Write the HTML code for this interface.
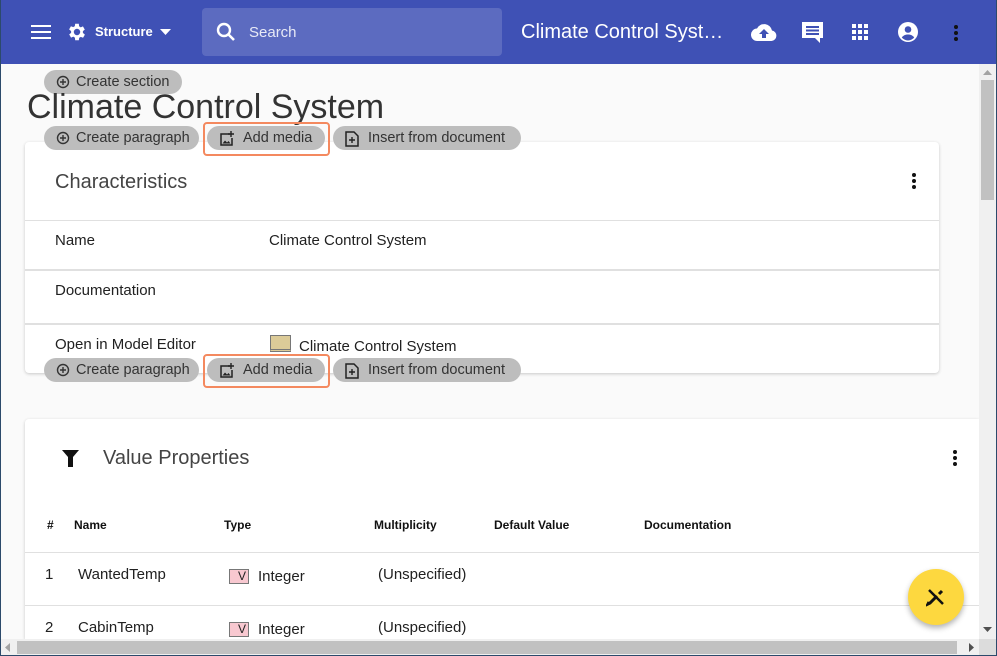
<!DOCTYPE html>
<html><head><style>
*{box-sizing:border-box;margin:0;padding:0}
html{width:997px;height:656px;overflow:hidden}
body{width:997px;height:656px;overflow:hidden;position:relative;font-family:"Liberation Sans",Arial,sans-serif;background:#fafafa;color:#212121}
.frame{position:absolute;inset:0;border:1px solid #2c4a6b;border-top:none;pointer-events:none;z-index:50}
.hdr{position:absolute;left:0;top:0;width:997px;height:64px;background:#3f51b5;color:#fff}
.abs{position:absolute}
.search{left:202px;top:8px;width:300px;height:48px;background:#5c6bc0;border-radius:4px}
.chip{position:absolute;height:24px;background:#bdbdbd;border-radius:12px;font-size:14.5px;color:#333;line-height:24px;padding-left:32px;white-space:nowrap}
.chip svg{position:absolute;left:12px;top:5px}
.hl{position:absolute;border:2px solid #f4895f;border-radius:4px}
.card{position:absolute;background:#fff;box-shadow:0 1px 3px rgba(0,0,0,.2);border-radius:4px}
.sep{position:absolute;left:0;right:0;height:2px;background:#e0e0e0}
.t{position:absolute;font-size:15px;color:#212121;white-space:nowrap}
.th{position:absolute;font-size:12px;font-weight:bold;color:#111}
.vbox{position:absolute;width:20px;height:15px;background:#f8c8d0;border:1px solid #777;font-size:12px;text-align:right;padding-right:2px;line-height:13px}
.dots{position:absolute;width:4px}
.dots i{display:block;width:4px;height:4px;background:#111;border-radius:50%;margin-bottom:2px}
</style></head><body>
<div class="hdr">
 <svg class="abs" style="left:31px;top:24px" width="20" height="16"><rect y="1" width="20" height="2" fill="#fff"/><rect y="7" width="20" height="2" fill="#fff"/><rect y="13" width="20" height="2" fill="#fff"/></svg>
 <svg class="abs" style="left:66px;top:21px" width="22" height="22" viewBox="0 0 24 24"><path fill="#fff" d="M19.4 13a7.5 7.5 0 000-2l2.1-1.6-2-3.5-2.5 1a7 7 0 00-1.7-1L15 3h-4l-.4 2.7a7 7 0 00-1.7 1l-2.5-1-2 3.5L6.6 11a7.5 7.5 0 000 2l-2.1 1.6 2 3.5 2.5-1a7 7 0 001.7 1L11 21h4l.4-2.7a7 7 0 001.7-1l2.5 1 2-3.5zM13 15.5a3.5 3.5 0 110-7 3.5 3.5 0 010 7z" transform="translate(-1 0)"/></svg>
 <div class="abs" style="left:95px;top:24px;font-size:13px;font-weight:bold">Structure</div>
 <svg class="abs" style="left:160px;top:29px" width="11" height="6"><path d="M0 0h11L5.5 6z" fill="#fff"/></svg>
 <div class="abs search"></div>
 <svg class="abs" style="left:216px;top:22px" width="20" height="20" viewBox="0 0 20 20"><circle cx="8" cy="8" r="6" stroke="#fff" stroke-width="2.4" fill="none"/><path d="M12.5 12.5L18 18" stroke="#fff" stroke-width="2.6"/></svg>
 <div class="abs" style="left:249px;top:24px;font-size:15px;color:#e8eaf6">Search</div>
 <div class="abs" style="left:521px;top:21px;font-size:20px">Climate Control Syst…</div>
 <svg class="abs" style="left:751px;top:22px" width="26" height="20" viewBox="0 0 26 20"><path d="M21 8.5A8 8 0 006 6.5 6 6 0 006.5 19H20.5a5.3 5.3 0 00.5-10.5z" fill="#fff"/><path d="M13 7l-5 5h3v4h4v-4h3z" fill="#3f51b5"/></svg>
 <svg class="abs" style="left:802px;top:22px" width="22" height="22" viewBox="0 0 22 22"><path d="M0 0h21v16h-3v5l-5-5H0z" fill="#fff"/><rect x="4" y="4" width="13" height="2" fill="#3f51b5"/><rect x="4" y="7.5" width="13" height="2" fill="#3f51b5"/><rect x="4" y="11" width="13" height="2" fill="#3f51b5"/></svg>
 <svg class="abs" style="left:852px;top:24px" width="16" height="16"><g fill="#fff"><rect width="4" height="4"/><rect x="6" width="4" height="4"/><rect x="12" width="4" height="4"/><rect y="6" width="4" height="4"/><rect x="6" y="6" width="4" height="4"/><rect x="12" y="6" width="4" height="4"/><rect y="12" width="4" height="4"/><rect x="6" y="12" width="4" height="4"/><rect x="12" y="12" width="4" height="4"/></g></svg>
 <svg class="abs" style="left:898px;top:22px" width="20" height="20" viewBox="0 0 20 20"><circle cx="10" cy="10" r="10" fill="#fff"/><circle cx="10" cy="7.5" r="3.3" fill="#3f51b5"/><path d="M3.8 15.5c1.5-2.2 3.8-3 6.2-3s4.7.8 6.2 3A8 8 0 013.8 15.5z" fill="#3f51b5"/></svg>
 <div class="dots" style="left:954px;top:25px"><i></i><i></i><i></i></div>
</div>

<div class="chip" style="left:44px;top:70px;width:138px">
 <svg width="14" height="14" viewBox="0 0 14 14"><circle cx="7" cy="7" r="5.5" stroke="#333" stroke-width="1.4" fill="none"/><path d="M7 4v6M4 7h6" stroke="#333" stroke-width="1.4"/></svg>Create section</div>
<div class="abs" style="left:27px;top:88px;font-size:34px;color:#333">Climate Control System</div>

<div class="card" style="left:25px;top:142px;width:914px;height:231px">
 <div class="t" style="left:30px;top:29px;font-size:20px;color:#444">Characteristics</div>
 <div class="dots" style="left:887px;top:31px"><i></i><i></i><i></i></div>
 <div class="sep" style="top:78px;height:1px"></div>
 <div class="t" style="left:30px;top:90px">Name</div>
 <div class="t" style="left:244px;top:90px">Climate Control System</div>
 <div class="sep" style="top:127px"></div>
 <div class="t" style="left:30px;top:140px">Documentation</div>
 <div class="sep" style="top:181px"></div>
 <div class="t" style="left:30px;top:194px">Open in Model Editor</div>
 <div class="abs" style="left:245px;top:193px;width:21px;height:17px;background:#dccb98;border:1px solid #777;border-bottom:3px double #777"></div>
 <div class="t" style="left:274px;top:196px">Climate Control System</div>
</div>

<div class="chip" style="left:44px;top:126px;width:155px"><svg width="14" height="14" viewBox="0 0 14 14"><circle cx="7" cy="7" r="5.5" stroke="#333" stroke-width="1.4" fill="none"/><path d="M7 4v6M4 7h6" stroke="#333" stroke-width="1.4"/></svg>Create paragraph</div>
<div class="chip" style="left:207px;top:126px;width:118px;padding-left:36px"><svg width="16" height="16" viewBox="0 0 16 16"><path d="M11 3H2v11h11V7" stroke="#222" stroke-width="1.5" fill="none"/><path d="M12 0v6M9 3h6" stroke="#222" stroke-width="1.4"/><path d="M3.5 12.5l2.5-3 2 2 1.5-1.5 2 2.5z" fill="#222"/></svg>Add media</div>
<div class="hl" style="left:203px;top:122px;width:127px;height:34px"></div>
<div class="chip" style="left:333px;top:126px;width:188px;padding-left:35px"><svg width="14" height="16" viewBox="0 0 14 16"><path d="M1 1h8l4 4v10H1z" stroke="#222" stroke-width="1.5" fill="none"/><path d="M7 6v6M4 9h6" stroke="#222" stroke-width="1.4"/></svg>Insert from document</div>

<div class="chip" style="left:44px;top:358px;width:155px"><svg width="14" height="14" viewBox="0 0 14 14"><circle cx="7" cy="7" r="5.5" stroke="#333" stroke-width="1.4" fill="none"/><path d="M7 4v6M4 7h6" stroke="#333" stroke-width="1.4"/></svg>Create paragraph</div>
<div class="chip" style="left:207px;top:358px;width:118px;padding-left:36px"><svg width="16" height="16" viewBox="0 0 16 16"><path d="M11 3H2v11h11V7" stroke="#222" stroke-width="1.5" fill="none"/><path d="M12 0v6M9 3h6" stroke="#222" stroke-width="1.4"/><path d="M3.5 12.5l2.5-3 2 2 1.5-1.5 2 2.5z" fill="#222"/></svg>Add media</div>
<div class="hl" style="left:203px;top:354px;width:127px;height:34px"></div>
<div class="chip" style="left:333px;top:358px;width:188px;padding-left:35px"><svg width="14" height="16" viewBox="0 0 14 16"><path d="M1 1h8l4 4v10H1z" stroke="#222" stroke-width="1.5" fill="none"/><path d="M7 6v6M4 9h6" stroke="#222" stroke-width="1.4"/></svg>Insert from document</div>

<div class="card" style="left:25px;top:419px;width:954px;height:220px;border-radius:4px 0 0 0">
 <svg class="abs" style="left:37px;top:31px" width="17" height="17" viewBox="0 0 17 17"><path d="M0 0h17l-6 7v10H6V7z" fill="#111"/></svg>
 <div class="t" style="left:78px;top:28px;font-size:20px;color:#444">Value Properties</div>
 <div class="dots" style="left:928px;top:31px"><i></i><i></i><i></i></div>
 <div class="th" style="left:22px;top:99px">#</div>
 <div class="th" style="left:49px;top:99px">Name</div>
 <div class="th" style="left:199px;top:99px">Type</div>
 <div class="th" style="left:349px;top:99px">Multiplicity</div>
 <div class="th" style="left:469px;top:99px">Default Value</div>
 <div class="th" style="left:619px;top:99px">Documentation</div>
 <div class="sep" style="top:133px;height:1px"></div>
 <div class="t" style="left:20px;top:147px">1</div>
 <div class="t" style="left:53px;top:147px">WantedTemp</div>
 <div class="vbox" style="left:204px;top:150px">V</div>
 <div class="t" style="left:233px;top:149px">Integer</div>
 <div class="t" style="left:353px;top:147px">(Unspecified)</div>
 <div class="sep" style="top:186px;height:1px"></div>
 <div class="t" style="left:20px;top:200px">2</div>
 <div class="t" style="left:53px;top:200px">CabinTemp</div>
 <div class="vbox" style="left:204px;top:203px">V</div>
 <div class="t" style="left:233px;top:202px">Integer</div>
 <div class="t" style="left:353px;top:200px">(Unspecified)</div>
</div>

<div class="abs" style="left:908px;top:569px;width:56px;height:56px;border-radius:50%;background:#fdd83f;box-shadow:0 3px 6px rgba(0,0,0,.3)"></div>
<svg class="abs" style="left:926px;top:587px" width="20" height="20" viewBox="0 0 20 20"><path d="M3 3l14 14" stroke="#111" stroke-width="2.5"/><path d="M16 4l-3 3M11 9l-7 7-2 1 1-2" stroke="#111" stroke-width="3"/></svg>

<div class="abs" style="left:979px;top:64px;width:17px;height:575px;background:#f0f0f0"></div>
<div class="abs" style="left:981px;top:80px;width:13px;height:120px;background:#c1c1c1"></div>
<svg class="abs" style="left:983px;top:70px" width="9" height="5"><path d="M0 5h9L4.5 0z" fill="#a3a3a3"/></svg>
<svg class="abs" style="left:983px;top:627px" width="9" height="5"><path d="M0 0h9L4.5 5z" fill="#505050"/></svg>
<div class="abs" style="left:0;top:639px;width:997px;height:17px;background:#f0f0f0"></div>
<div class="abs" style="left:17px;top:641px;width:940px;height:13px;background:#c1c1c1"></div>
<div class="abs" style="left:979px;top:639px;width:17px;height:17px;background:#dcdcdc"></div>
<svg class="abs" style="left:5px;top:643px" width="5" height="9"><path d="M5 0v9L0 4.5z" fill="#a3a3a3"/></svg>
<svg class="abs" style="left:969px;top:643px" width="5" height="9"><path d="M0 0v9l5-4.5z" fill="#505050"/></svg>
<div class="frame"></div>
</body></html>
